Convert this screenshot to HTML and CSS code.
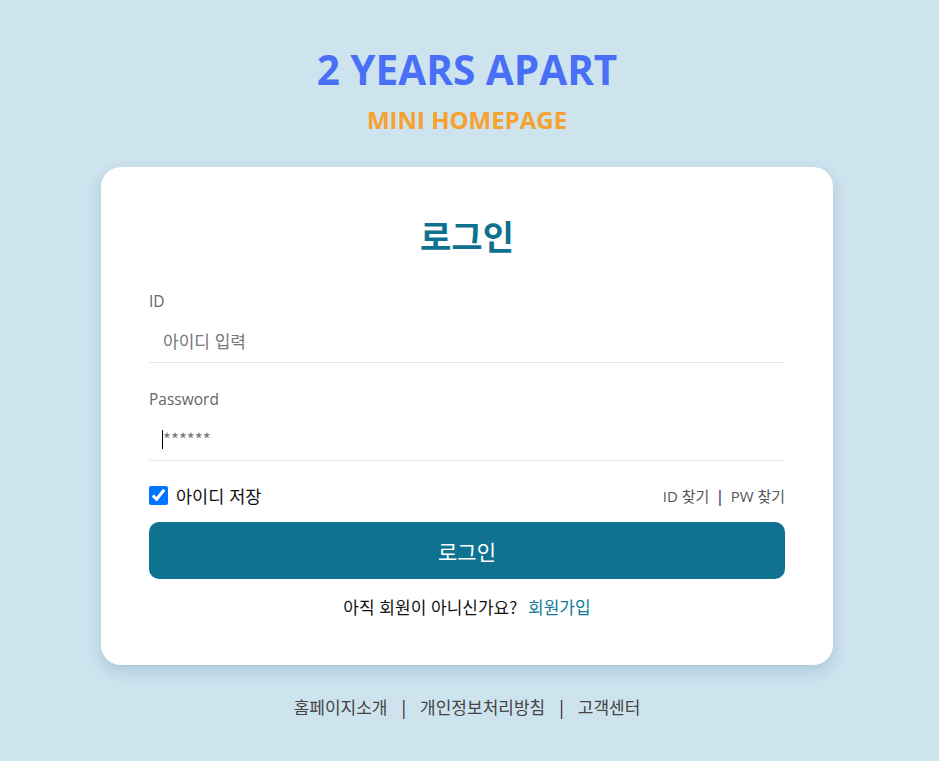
FILE: index.html
```html
<!DOCTYPE html>
<html lang="ko">
<head>
<meta charset="utf-8">
<title>2 YEARS APART - 로그인</title>
<link rel="stylesheet" href="styles.css">
</head>
<body>
<header class="brand">
  <h1 class="brand-title">2 YEARS APART</h1>
  <p class="brand-sub">MINI HOMEPAGE</p>
</header>
<main class="card">
  <h2 class="card-title">로그인</h2>
  <form class="form">
    <div class="field">
      <label class="field-label" for="uid">ID</label>
      <input class="field-input" id="uid" type="text" placeholder="아이디 입력">
    </div>
    <div class="field field-last">
      <label class="field-label" for="upw">Password</label>
      <div class="pw-wrap"><span class="caret"></span><input class="field-input" id="upw" type="password" placeholder="******"></div>
    </div>
    <div class="options">
      <label class="remember"><input type="checkbox" class="check" checked> 아이디 저장</label>
      <div class="finds"><a class="find">ID 찾기</a><span class="bar">|</span><a class="find">PW 찾기</a></div>
    </div>
    <button type="button" class="btn">로그인</button>
    <p class="signup">아직 회원이 아니신가요? <a class="signup-link">회원가입</a></p>
  </form>
</main>
<footer class="footer">
  <a class="foot-link">홈페이지소개</a><span class="foot-bar">|</span><a class="foot-link">개인정보처리방침</a><span class="foot-bar">|</span><a class="foot-link">고객센터</a>
</footer>
</body>
</html>
```
FILE: styles.css
```css
* { box-sizing: border-box; }
html, body { margin: 0; padding: 0; }
body {
  background: #cde3ee;
  font-family: "Open Sans", "Noto Sans CJK KR", sans-serif;
  color: #111;
  display: flex;
  flex-direction: column;
  align-items: center;
  min-height: 761px;
  padding-right: 5px;
}
.brand { padding-top: 45px; text-align: center; }
.brand-title {
  margin: 0;
  font-size: 40.5px;
  line-height: 50px;
  font-weight: 700;
  color: #4a6ff7;
}
.brand-sub {
  margin: 11px 0 0;
  font-size: 24px;
  line-height: 28px;
  font-weight: 700;
  color: #f7a12f;
}
.card {
  margin-top: 33px;
  width: 732px;
  background: #fff;
  border-radius: 20px;
  padding: 48px 48px 47px;
  box-shadow: 0 6px 14px rgba(60, 100, 130, 0.22);
}
.card-title {
  margin: 0 0 31px;
  text-align: center;
  font-size: 34px;
  line-height: 44px;
  font-weight: 700;
  color: #0f7190;
}
.form { display: flex; flex-direction: column; }
.field { display: flex; flex-direction: column; margin-bottom: 25px; }
.field-last { margin-bottom: 22px; }
.field-label {
  font-size: 15.5px;
  line-height: 22px;
  color: #666;
}
.field-input {
  margin-top: 7px;
  height: 44px;
  width: 100%;
  border: none;
  border-bottom: 1px solid #e1e7ef;
  padding: 0 14px;
  font-family: "Noto Sans CJK KR", sans-serif;
  font-size: 17px;
  color: #333;
  outline: none;
  background: transparent;
}
.field-input::placeholder { color: #777; }
.pw-wrap { position: relative; display: flex; flex-direction: column; }
.caret {
  position: absolute;
  left: 13px;
  top: 20px;
  width: 1px;
  height: 19px;
  background: #000;
}
.options {
  display: flex;
  justify-content: space-between;
  align-items: center;
  height: 24px;
}
.remember {
  display: flex;
  align-items: center;
  gap: 8px;
  font-size: 17.5px;
  font-family: "Noto Sans CJK KR", sans-serif;
  color: #111;
}
.check {
  margin: 0;
  width: 19px;
  height: 19px;
  accent-color: #0075ff;
}
.finds {
  display: flex;
  align-items: center;
  font-size: 15px;
  color: #555;
}
.find { color: #555; }
.bar { margin: 0 6px; color: #3b1a6b; font-size: 17px; }
.btn {
  margin-top: 15px;
  height: 57px;
  border: none;
  border-radius: 10px;
  background: #0e7290;
  color: #fff;
  font-family: "Noto Sans CJK KR", sans-serif;
  font-size: 21px;
}
.signup {
  margin: 17px 0 0;
  text-align: center;
  font-size: 17px;
  line-height: 22px;
  font-family: "Noto Sans CJK KR", sans-serif;
  color: #111;
}
.signup-link { color: #0e7a96; margin-left: 6px; }
.footer {
  margin-top: 32px;
  display: flex;
  align-items: center;
  font-family: "Noto Sans CJK KR", sans-serif;
  font-size: 17px;
  line-height: 20px;
  color: #444;
}
.foot-link { color: #444; }
.foot-bar { margin: 0 14px; color: #222; }
```
